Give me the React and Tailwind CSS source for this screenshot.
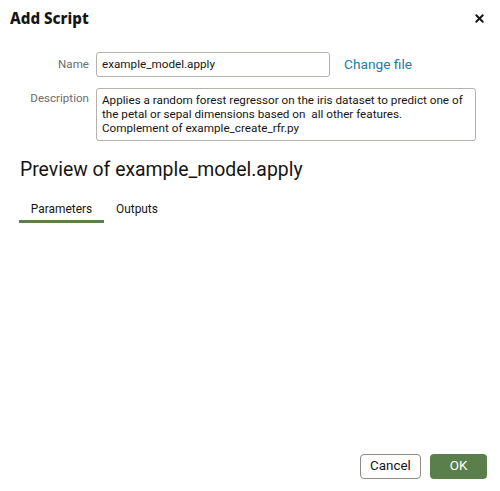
import { X } from 'lucide-react'

export default function App() {
  return (
    <div
      className="flex h-[491px] w-[500px] flex-col bg-white text-[#161513]"
      style={{ fontFamily: 'Roboto, "Noto Sans", sans-serif' }}
    >
      <div className="flex items-center justify-between pl-[10px] pr-[14px] pt-[6px]">
        <h1 className="text-[15.2px] font-extrabold leading-[24px]" style={{ fontFamily: '"Noto Sans", sans-serif' }}>Add Script</h1>
        <X className="h-[13px] w-[13px]" strokeWidth={3.5} />
      </div>

      <div className="mt-[22px] flex items-center">
        <label className="w-[89px] text-right text-[11.6px] text-[#6f6c69]">Name</label>
        <div className="ml-[7px] flex h-[25px] w-[234px] items-center rounded-[3px] border border-[#b5b2ae] px-[5px] text-[11.7px]">
          example_model.apply
        </div>
        <a className="ml-[14px] text-[13.7px] text-[#227aa3]">Change file</a>
      </div>

      <div className="mt-[11px] flex items-start">
        <label className="w-[89px] pt-[2px] text-right text-[11.6px] text-[#6f6c69]">Description</label>
        <div className="ml-[7px] h-[53px] w-[380px] rounded-[3px] border border-[#b5b2ae] pl-[5px] pr-[3px] pt-[4px] text-[11.7px] leading-[14px]">
          Applies a random forest regressor on the iris dataset to predict one of the petal or sepal dimensions based on&nbsp; all other features.
          <br />
          Complement of example_create_rfr.py
        </div>
      </div>

      <h2 className="ml-[20px] mt-[16px] text-[19.4px] font-normal leading-[26px]">Preview of example_model.apply</h2>

      <div className="ml-[19px] mt-[18px] flex text-[11.9px]">
        <div className="w-[85px] border-b-[3px] border-[#5b7f4a] pb-[1px] text-center">Parameters</div>
        <div className="ml-[12px] pb-[1px]">Outputs</div>
      </div>

      <div className="flex-1" />

      <div className="mb-[12px] flex justify-end gap-[9px] pr-[13px]">
        <button className="h-[25px] w-[61px] rounded-[4px] border border-[#8f8a85] bg-white text-[13.4px] text-[#161513]">Cancel</button>
        <button className="h-[25px] w-[57px] rounded-[4px] bg-[#5b7f4a] text-[13.4px] text-white">OK</button>
      </div>
    </div>
  )
}
